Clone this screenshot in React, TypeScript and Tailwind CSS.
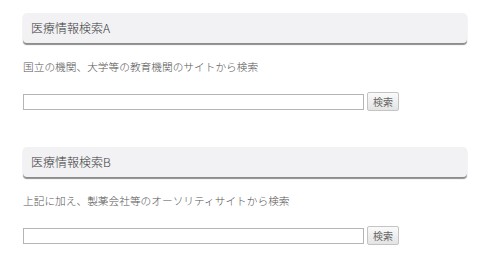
const sections = [
  { title: "医療情報検索A", desc: "国立の機関、大学等の教育機関のサイトから検索" },
  { title: "医療情報検索B", desc: "上記に加え、製薬会社等のオーソリティサイトから検索" },
];

export default function App() {
  return (
    <div
      className="w-[490px] h-[277px] bg-white px-[23px] pt-[13px]"
      style={{ fontFamily: '"Noto Sans CJK JP", "Liberation Sans", sans-serif' }}
    >
      {sections.map((s, i) => (
        <section key={s.title} className={i > 0 ? "mt-[36px]" : ""}>
          {/* section header */}
          <div className="w-[444px] h-[30px] flex items-center pl-[8px] rounded-[4px] bg-[#f2f2f4] shadow-[0_2px_1px_rgba(0,0,0,0.45)]">
            <h2 className="text-[12px] leading-none font-light text-[#3a3a3a]">{s.title}</h2>
          </div>
          <p className="mt-[16px] text-[10.7px] leading-[16px] font-light text-[#555]">{s.desc}</p>
          <form className="mt-[17px] flex items-center gap-[3px]" onSubmit={(e) => e.preventDefault()}>
            <input
              type="text"
              className="w-[341px] h-[16px] border border-[#b5b5b5] bg-white outline-none"
            />
            <button
              type="submit"
              className="w-[32px] h-[19px] text-[10px] leading-none text-[#666] border border-[#c4c4c4] rounded-[2px] bg-gradient-to-b from-[#fafafa] to-[#e4e4e4]"
            >
              検索
            </button>
          </form>
        </section>
      ))}
    </div>
  );
}
